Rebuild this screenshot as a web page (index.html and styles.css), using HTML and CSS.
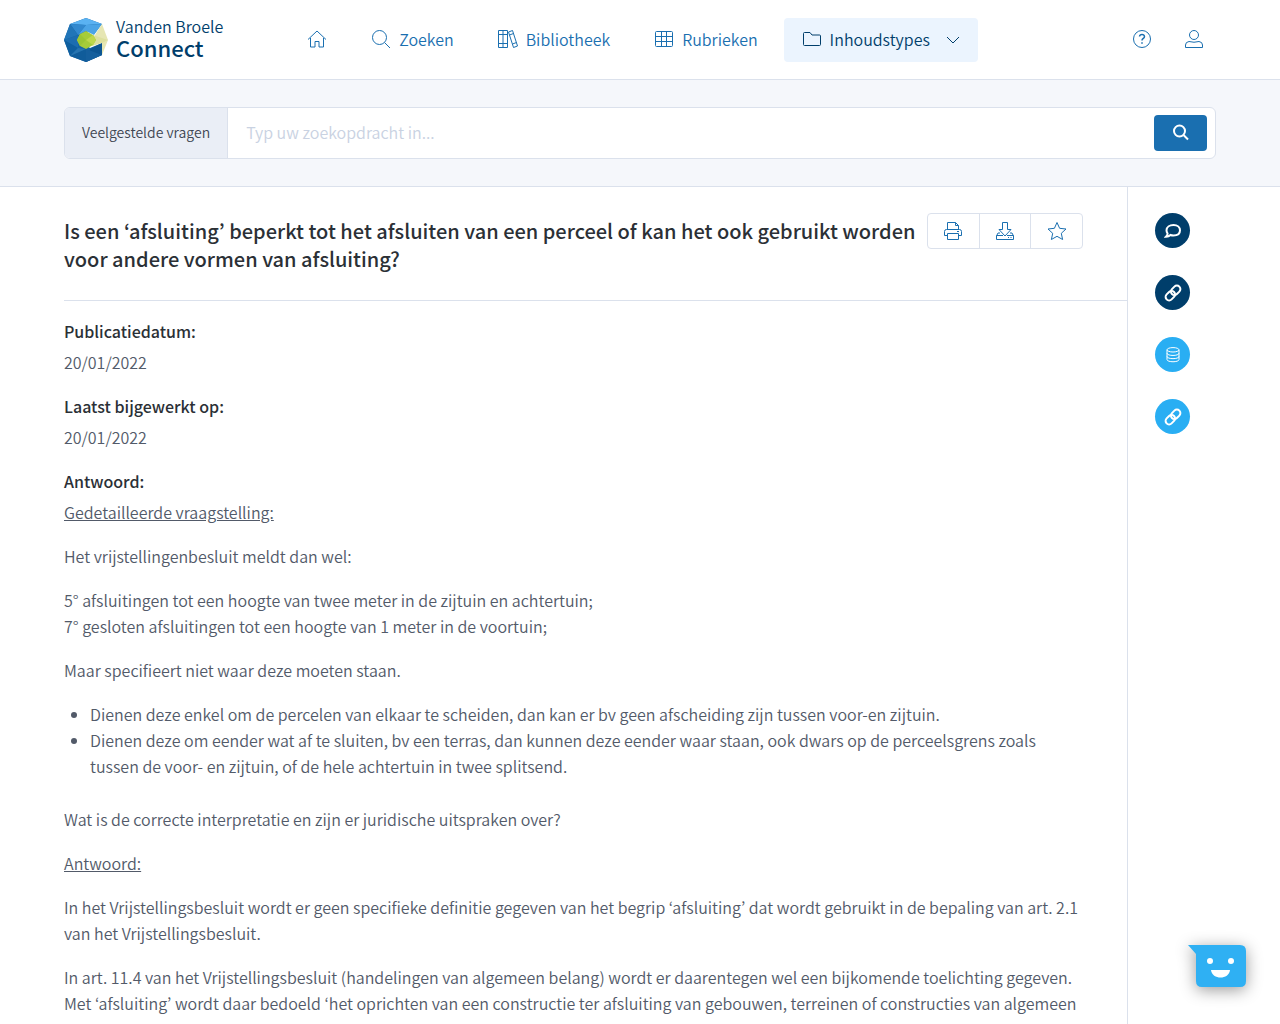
FILE: index.html
```html
<!DOCTYPE html>
<html lang="nl">
<head>
    <meta charset="UTF-8">
    <meta name="viewport" content="width=device-width, initial-scale=1.0">
    <title>Vanden Broele Connect</title>
    <link rel="stylesheet" href="styles.css">
</head>
<body>
    <header class="header">
        <a class="logo" href="#">
            <svg width="44" height="44" viewBox="0 0 44 44">
                <path fill="#1565a5" d="M22 0 6 6 0 22l6 16 16 6 16-7V25l-12 5-10-8 8-9 6 3 8-10z"/>
                <path fill="#5ab2f2" d="M22 0 6 6l16 1 16-1z"/>
                <path fill="#3289cf" d="M6 6 22 7l-8 10z"/>
                <path fill="#4ba4e6" d="M22 7 38 6l-8 11-8-4-8 4z"/>
                <path fill="#2175b8" d="M6 6l8 11-14 5z"/>
                <path fill="#1c6db0" d="M0 22l14-5v13z"/>
                <path fill="#0f5f9f" d="M0 22l14 8-8 8z"/>
                <path fill="#105c9a" d="M6 38l16-8v14z"/>
                <path fill="#2774b0" d="M6 38l8-8 8 1z"/>
                <path fill="#0d5592" d="M22 44l16-7V25l-12 6z"/>
                <path fill="#155f9d" d="M22 31l16 6-16 7z"/>
                <path fill="#e6e6b3" d="M38 6l6 16-6 15V25l-8-3 1-5z"/>
                <path fill="#dde09f" d="M44 22 29 17l-1 11 10-3z"/>
                <path fill="#a6cc3a" d="M13 22l3-6 6-3 7 4 3 5-3 5-7 4-6-3z"/>
                <path fill="#bfd84c" d="M22 22l7-5 3 5-3 5z"/>
                <path fill="#9bc634" d="M13 22l3-6 6 6-6 6z"/>
            </svg>
            <span class="logo-text"><span>Vanden Broele</span><strong>Connect</strong></span>
        </a>
        <nav class="nav">
            <a class="nav-item" href="#" aria-label="Home">
                <svg class="icon" viewBox="0 0 20 20"><path d="M1 10.500l9-8.500 9 8.500M3.500 9v9h4.500v-5.500h4V18h4.500V9"/></svg>
            </a>
            <a class="nav-item" href="#">
                <svg class="icon" viewBox="0 0 20 20"><circle cx="8.500" cy="8.500" r="7"/><path d="M13.500 13.500l5.500 5.500"/></svg>
                Zoeken
            </a>
            <a class="nav-item" href="#">
                <svg class="icon" viewBox="1 0 20 20"><path d="M1.500 1.500h9v17h-9zM6 1.500v17M1.500 5.500h9M1.500 14.500h9M11.500 3l4-1.500 5 15.500-4 1.500zM12.500 6l4-1.500M15.500 15l4-1.500"/></svg>
                Bibliotheek
            </a>
            <a class="nav-item" href="#">
                <svg class="icon" viewBox="0 0 20 20"><rect x="1.500" y="2.500" width="17" height="15" rx="1"/><path d="M1.500 7.500h17M1.500 12.500h17M7.500 2.500v15M12.500 2.500v15"/></svg>
                Rubrieken
            </a>
            <button class="nav-item active" type="button">
                <svg class="icon" viewBox="0 0 20 20"><path d="M1.500 4.500q0-1 1-1H8l2 2.500h7.500q1 0 1 1v8.500q0 1-1 1h-15q-1 0-1-1z"/></svg>
                Inhoudstypes
                <svg class="chevron" width="14" height="14" viewBox="0 0 14 14"><path d="M1 5l6 6 6-6"/></svg>
            </button>
        </nav>
        <div class="user-links">
            <a href="#" aria-label="Help">
                <svg class="icon" viewBox="0 0 20 20"><circle cx="10" cy="10" r="8.500"/><path stroke-width="1.500" d="M7.500 7.500q.3-2 2.500-2t2.500 2q0 1.300-1.300 2T10 11.500M10 13.200v1.500"/></svg>
            </a>
            <a href="#" aria-label="Account">
                <svg class="icon" viewBox="0 0 20 20"><circle cx="10" cy="6" r="4.500"/><path d="M1.500 18.500v-2.500q0-3 3.500-3.500 5 1.500 10 0 3.500.5 3.500 3.500v2.500z"/></svg>
            </a>
        </div>
    </header>

    <section class="search">
        <form class="search-box">
            <button class="search-type" type="button">Veelgestelde vragen</button>
            <input class="search-input" type="text" placeholder="Typ uw zoekopdracht in..." aria-label="Zoekopdracht">
            <button class="search-btn" type="submit" aria-label="Zoeken">
                <svg width="18" height="18" viewBox="0 0 18 18"><circle cx="7.500" cy="7" r="5.500"/><path d="M11.500 11l4.500 4.500"/></svg>
            </button>
        </form>
    </section>

    <div class="page">
        <main class="content">
            <div class="title-bar">
                <h1>Is een ‘afsluiting’ beperkt tot het afsluiten van een perceel of kan het ook gebruikt worden voor andere vormen van afsluiting?</h1>
                <div class="toolbar">
                    <button type="button" aria-label="Afdrukken">
                        <svg class="icon" viewBox="0 0 20 20"><path d="M4.500 8.500v-7h8l3 3v4M12.500 1.500v3h3M4.500 14.500h-3v-4q0-2 2-2h13q2 0 2 2v4h-3M4.500 12.500h11v6h-11zM14 10.500h2"/></svg>
                    </button>
                    <button type="button" aria-label="Downloaden">
                        <svg class="icon" viewBox="0 0 20 20"><path d="M7.500 1.500h5v7h3.500L10 15 4 8.500h3.500zM5 12H3l-1.500 3v3.500h17V15L17 12h-2M1.500 14.500H8M12 14.500h6.500M13 16.500h1M15.500 16.500h1"/></svg>
                    </button>
                    <button type="button" aria-label="Favoriet">
                        <svg class="icon" viewBox="0 0 20 20"><path d="M10 1.500l2.600 5.800 6.400.7-4.700 4.300 1.300 6.200-5.600-3.200-5.600 3.200 1.300-6.200L1 8l6.400-.7z"/></svg>
                    </button>
                </div>
            </div>
            <article class="article">
                <h2>Publicatiedatum:</h2>
                <p>20/01/2022</p>
                <h2>Laatst bijgewerkt op:</h2>
                <p>20/01/2022</p>
                <h2>Antwoord:</h2>
                <p><u>Gedetailleerde vraagstelling:</u></p>
                <p>Het vrijstellingenbesluit meldt dan wel:</p>
                <p>5° afsluitingen tot een hoogte van twee meter in de zijtuin en achtertuin;<br>
                7° gesloten afsluitingen tot een hoogte van 1 meter in de voortuin;</p>
                <p>Maar specifieert niet waar deze moeten staan.</p>
                <ul>
                    <li>Dienen deze enkel om de percelen van elkaar te scheiden, dan kan er bv geen afscheiding zijn tussen voor-en zijtuin.</li>
                    <li>Dienen deze om eender wat af te sluiten, bv een terras, dan kunnen deze eender waar staan, ook dwars op de perceelsgrens zoals tussen de voor- en zijtuin, of de hele achtertuin in twee splitsend.</li>
                </ul>
                <p>Wat is de correcte interpretatie en zijn er juridische uitspraken over?</p>
                <p><u>Antwoord:</u></p>
                <p>In het Vrijstellingsbesluit wordt er geen specifieke definitie gegeven van het begrip ‘afsluiting’ dat wordt gebruikt in de bepaling van art. 2.1 van het Vrijstellingsbesluit.</p>
                <p>In art. 11.4 van het Vrijstellingsbesluit (handelingen van algemeen belang) wordt er daarentegen wel een bijkomende toelichting gegeven. Met ‘afsluiting’ wordt daar bedoeld ‘het oprichten van een constructie ter afsluiting van gebouwen, terreinen of constructies van algemeen</p>
            </article>
        </main>
        <aside class="side">
            <a class="dark" href="#" aria-label="Reacties">
                <svg width="18" height="18" viewBox="0 0 18 18"><path d="M9.500 3C13.500 3 16 5.200 16 8.300s-2.500 5.200-6.500 5.200q-1.700 0-3-.5-1.700 1.700-4.500 1.700 1.600-1.700 1.600-3.200Q2.500 10 2.500 8.300C2.500 5.200 5.500 3 9.500 3z"/></svg>
            </a>
            <a class="dark" href="#" aria-label="Links">
                <svg width="18" height="18" viewBox="0 0 18 18"><g transform="rotate(-45 9 9)"><rect x="0" y="5.500" width="10.500" height="7" rx="3.500"/><rect x="7.500" y="5.500" width="10.500" height="7" rx="3.500"/></g></svg>
            </a>
            <a class="light" href="#" aria-label="Databank">
                <svg width="18" height="18" viewBox="0 0 18 18"><ellipse cx="9" cy="3.800" rx="6" ry="2.200"/><path d="M3 4v9.500c0 3 12 3 12 0V4M3 7.200c0 3 12 3 12 0M3 10.400c0 3 12 3 12 0"/></svg>
            </a>
            <a class="light" href="#" aria-label="Verwijzingen">
                <svg width="18" height="18" viewBox="0 0 18 18"><g transform="rotate(-45 9 9)"><rect x="0" y="5.500" width="10.500" height="7" rx="3.500"/><rect x="7.500" y="5.500" width="10.500" height="7" rx="3.500"/></g></svg>
            </a>
        </aside>
    </div>

    <button class="chat" type="button" aria-label="Chat">
        <svg width="58" height="42" viewBox="0 0 58 42">
            <path fill="#2fb0f3" d="M0 0h52q6 0 6 6v30q0 6-6 6H14q-6 0-6-6V9z"/>
            <circle cx="22" cy="16" r="3" fill="#fff"/>
            <circle cx="43" cy="16" r="3" fill="#fff"/>
            <path fill="#fff" d="M23 25h19c-1 10-18 10-19 0z"/>
        </svg>
    </button>
</body>
</html>
```
FILE: styles.css
```css
* {
    box-sizing: border-box;
}

body {
    margin: 0;
    min-height: 100vh;
    display: flex;
    flex-direction: column;
    font-family: 'Noto Sans CJK KR', 'Noto Sans', sans-serif;
    font-size: 16px;
    font-weight: 350;
    line-height: 26px;
    color: #525a69;
    background-color: #fff;
}

button, input {
    font: inherit;
    color: inherit;
    border: none;
    background: none;
    padding: 0;
}

button {
    cursor: pointer;
}

a {
    color: #1a6fb0;
    text-decoration: none;
}

svg {
    flex: none;
    fill: none;
    stroke: currentColor;
}

.icon {
    width: 20px;
    height: 20px;
}

/* header */
.header {
    display: flex;
    align-items: center;
    height: 80px;
    padding: 0 5%;
    border-bottom: 1px solid #dbe1ec;
}

.logo {
    display: flex;
    align-items: center;
    gap: 8px;
    margin-right: 66px;
    color: #003e6b;
}

.logo svg, .chat svg {
    stroke: none;
}

.logo-text {
    display: flex;
    flex-direction: column;
    line-height: 21px;
    padding-bottom: 6px;
}

.logo-text strong {
    font-size: 22px;
    font-weight: 500;
}

.nav {
    display: flex;
    gap: 8px;
}

.nav-item {
    display: flex;
    align-items: center;
    gap: 8px;
    height: 44px;
    padding: 0 18px 2px;
    border-radius: 4px;
}

.nav-item.active {
    background-color: #ebf4fe;
    color: #003e6b;
}

.chevron {
    margin-left: 8px;
}

.user-links {
    display: flex;
    gap: 32px;
    margin-left: auto;
    padding: 0 12px 2px 0;
}

.user-links a {
    display: flex;
}

/* search */
.search {
    padding: 27px 5%;
    background-color: #f5f7fb;
    border-bottom: 1px solid #dbe1ec;
}

.search-box {
    display: flex;
    align-items: center;
    height: 52px;
    padding-right: 8px;
    background-color: #fff;
    border: 1px solid #dbe1ec;
    border-radius: 6px;
}

.search-type {
    height: 100%;
    padding: 0 17px 2px;
    background-color: #eaeef6;
    border-right: 1px solid #dbe1ec;
    border-radius: 5px 0 0 5px;
    font-size: 14px;
    color: #3f4652;
}

.search-input {
    flex: 1;
    min-width: 0;
    padding: 0 18px 2px;
    outline: none;
}

.search-input::placeholder {
    color: #c9d2e2;
    opacity: 1;
}

.search-btn {
    display: flex;
    align-items: center;
    justify-content: center;
    width: 53px;
    height: 36px;
    border-radius: 4px;
    background-color: #1a6fb0;
    color: #fff;
}

.search-btn svg, .side svg {
    stroke-width: 2;
}

.side .light:nth-child(3) svg {
    stroke-width: 1;
}

/* page */
.page {
    display: flex;
    flex: 1;
}

.content {
    flex: 1;
    min-width: 0;
    padding-left: 5vw;
    border-right: 1px solid #dbe1ec;
}

.title-bar {
    display: flex;
    align-items: flex-start;
    justify-content: space-between;
    gap: 8px;
    padding: 26px 44px 27px 0;
    border-bottom: 1px solid #dbe1ec;
}

h1 {
    margin: 4px 0 0;
    font-size: 20px;
    font-weight: 500;
    line-height: 28px;
    color: #2b3036;
}

.toolbar {
    display: flex;
    flex: none;
    width: 156px;
    border: 1px solid #dbe1ec;
    border-radius: 4px;
    color: #1a6fb0;
}

.toolbar button {
    display: flex;
    flex: 1;
    align-items: center;
    justify-content: center;
    height: 34px;
}

.toolbar button + button {
    border-left: 1px solid #dbe1ec;
}

.article {
    padding: 17px 44px 0 0;
}

.article h2 {
    margin: 0 0 5px;
    font-size: 16px;
    font-weight: 500;
    line-height: 26px;
    color: #2b3036;
}

.article p {
    margin: 0 0 18px;
}

.article ul {
    margin: 0 0 27px;
    padding-left: 26px;
}

.side {
    display: flex;
    flex-direction: column;
    gap: 27px;
    width: 152px;
    padding: 26px 27px;
}

.side a {
    display: flex;
    align-items: center;
    justify-content: center;
    width: 35px;
    height: 35px;
    border-radius: 50%;
    color: #fff;
}

.dark {
    background-color: #003e6b;
}

.light {
    background-color: #29aef3;
}

/* chat button floats over the page */
.chat {
    position: fixed;
    right: 34px;
    bottom: 37px;
    display: flex;
    filter: drop-shadow(0 3px 8px rgba(0, 0, 0, 0.4));
}
```
